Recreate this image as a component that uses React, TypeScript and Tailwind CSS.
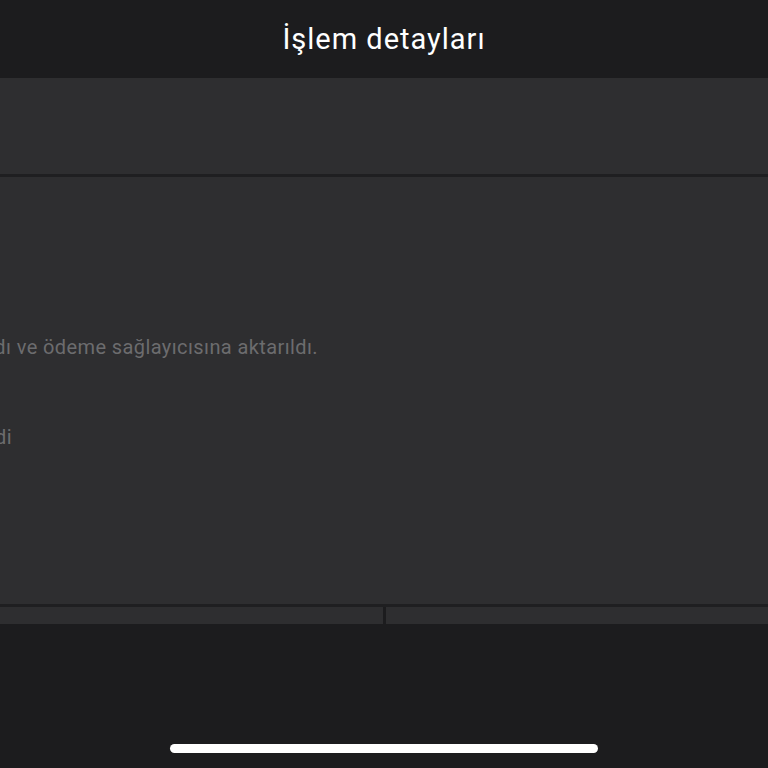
export default function App() {
  return (
    <div
      className="flex h-[768px] w-[768px] flex-col overflow-hidden bg-[#1c1c1e]"
      style={{ fontFamily: "Roboto, 'Noto Sans', sans-serif" }}
    >
      {/* nav bar */}
      <header className="flex h-[78px] shrink-0 items-center justify-center bg-[#1c1c1e]">
        <h1 className="text-[29px] font-normal leading-none tracking-[1px] text-white">İşlem detayları</h1>
      </header>

      {/* summary card */}
      <section className="h-[96px] shrink-0 bg-[#2e2e30]" />
      <div className="h-[3px] shrink-0 bg-[#1f1f21]" />

      {/* details card */}
      <section className="flex h-[427px] shrink-0 flex-col bg-[#2e2e30] text-[20px] tracking-[0.4px] text-[#6c6c6e]">
        <div className="mt-[157px] flex w-[318px] justify-end whitespace-nowrap leading-[26px]">
          <span>Ödemeniz alındı ve ödeme sağlayıcısına aktarıldı.</span>
        </div>
        <div className="mt-[64px] flex w-[12px] justify-end whitespace-nowrap leading-[26px]">
          <span>Gönderildi</span>
        </div>
      </section>
      <div className="h-[3px] shrink-0 bg-[#1f1f21]" />

      {/* action buttons */}
      <div className="flex h-[17px] shrink-0">
        <button type="button" className="flex-1 bg-[#2e2e30]" />
        <div className="w-[3px] bg-[#1c1c1e]" />
        <button type="button" className="flex-1 bg-[#2e2e30]" />
      </div>

      {/* home indicator */}
      <div className="flex flex-1 items-end justify-center pb-[15px]">
        <div className="h-[9px] w-[428px] rounded-full bg-white" />
      </div>
    </div>
  );
}
